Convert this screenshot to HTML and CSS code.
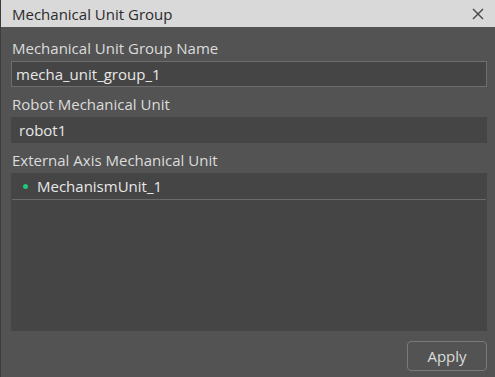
FILE: index.html
```html
<!DOCTYPE html>
<html>
<head>
	<meta charset="utf-8">
	<title>Mechanical Unit Group</title>
	<link rel="stylesheet" href="styles.css">
</head>
<body>
	<div class="dialog">
		<header class="titlebar">
			<span class="title">Mechanical Unit Group</span>
			<button class="close" title="Close">
				<svg width="12" height="12" viewBox="0 0 12 12"><path d="M1 1 L11 11 M11 1 L1 11" stroke="#444" stroke-width="1.4" fill="none"/></svg>
			</button>
		</header>
		<main class="content">
			<label class="label">Mechanical Unit Group Name</label>
			<input class="field edit" type="text" value="mecha_unit_group_1">

			<label class="label">Robot Mechanical Unit</label>
			<div class="field plain">robot1</div>

			<label class="label">External Axis Mechanical Unit</label>
			<ul class="list">
				<li class="item"><span class="dot"></span>MechanismUnit_1</li>
			</ul>

			<div class="buttons">
				<button class="apply">Apply</button>
			</div>
		</main>
	</div>
</body>
</html>
```

FILE: styles.css
```css
* {
	box-sizing: border-box;
	font-family: "Open Sans", "Noto Sans", sans-serif;
}
html, body {
	margin: 0;
	height: 100%;
	background-color: #535353;
}
.dialog {
	display: flex;
	flex-direction: column;
	height: 377px;
	border-left: 1px solid #3c3c3c;
}
.titlebar {
	display: flex;
	align-items: center;
	justify-content: space-between;
	height: 27px;
	background-color: #d9d9d9;
	padding: 0 11px 0 11px;
}
.title {
	font-size: 15px;
	color: #2b2b2b;
}
.close {
	background: transparent;
	border: none;
	padding: 0;
	display: flex;
}
.content {
	flex: 1;
	display: flex;
	flex-direction: column;
	padding: 12px 8px 6px 10px;
}
.label {
	font-size: 15px;
	color: #dcdcdc;
	height: 22px;
	line-height: 18px;
	padding-left: 1px;
}
.field {
	height: 26px;
	background-color: #454545;
	color: #e8e8e8;
	font-size: 15px;
	margin-bottom: 8px;
}
.edit {
	border: 1px solid #6e6e6e;
	padding: 0 4px;
	outline: none;
}
.plain {
	line-height: 26px;
	padding-left: 8px;
}
.list {
	flex: 1;
	margin: 0;
	padding: 0;
	list-style: none;
	background-color: #454545;
}
.item {
	display: flex;
	align-items: center;
	height: 27px;
	margin: 0 1px;
	padding-left: 11px;
	border-bottom: 1px solid #6a6a6a;
	color: #e8e8e8;
	font-size: 15px;
}
.dot {
	width: 5px;
	height: 5px;
	border-radius: 50%;
	background-color: #1ec97a;
	margin-right: 9px;
}
.buttons {
	display: flex;
	justify-content: flex-end;
	padding-top: 10px;
}
.apply {
	width: 80px;
	height: 30px;
	background-color: #535353;
	border: 1px solid #7a7a7a;
	border-radius: 4px;
	color: #dcdcdc;
	font-size: 15px;
}
```
